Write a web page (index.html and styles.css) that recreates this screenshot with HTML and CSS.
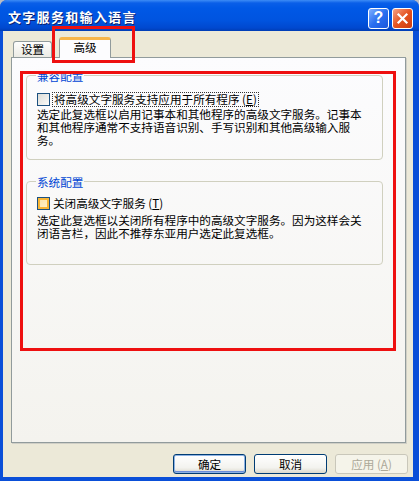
FILE: index.html
```html
<!DOCTYPE html>
<html>
<head>
<meta charset="utf-8">
<link rel="stylesheet" href="styles.css">
</head>
<body>
<div class="window">
  <div class="titlebar">
    <span class="title">文字服务和输入语言</span>
    <div class="tbtns">
      <div class="tbtn help">?</div>
      <div class="tbtn close">
        <svg width="13" height="13" viewBox="0 0 13 13"><path d="M2.5 2.5 L10.5 10.5 M10.5 2.5 L2.5 10.5" stroke="#fff" stroke-width="2.2" stroke-linecap="square"/></svg>
      </div>
    </div>
  </div>
  <div class="client">
    <div class="tabs">
      <div class="tab">设置</div>
      <div class="tab active">高级</div>
    </div>
    <div class="panel">
      <div class="group g1">
        <div class="gtitle">兼容配置</div>
        <div class="row">
          <span class="cb"></span>
          <span class="focus">将高级文字服务支持应用于所有程序 (<u>E</u>)</span>
        </div>
        <div class="desc">选定此复选框以启用记事本和其他程序的高级文字服务。记事本和其他程序通常不支持语音识别、手写识别和其他高级输入服务。</div>
      </div>
      <div class="group g2">
        <div class="gtitle">系统配置</div>
        <div class="row">
          <span class="cb hot"></span>
          <span class="lbl">关闭高级文字服务 (<u>T</u>)</span>
        </div>
        <div class="desc">选定此复选框以关闭所有程序中的高级文字服务。因为这样会关闭语言栏，因此不推荐东亚用户选定此复选框。</div>
      </div>
    </div>
    <div class="buttons">
      <div class="btn default">确定</div>
      <div class="btn">取消</div>
      <div class="btn disabled">应用 (<u>A</u>)</div>
    </div>
  </div>
  <div class="mark mark-tab"></div>
  <div class="mark mark-panel"></div>
</div>
</body>
</html>
```
FILE: styles.css
```css
*, *::before, *::after {
  box-sizing: border-box;
}
html, body {
  margin: 0;
  padding: 0;
  background: #b9bcc4;
}
body {
  font-family: "Noto Sans CJK SC", "DejaVu Sans", sans-serif;
  font-size: 12px;
  color: #000;
}
.window {
  position: relative;
  width: 419px;
  height: 481px;
  display: flex;
  flex-direction: column;
  border-radius: 7px 7px 0 0;
  background: #0a4fd8;
  overflow: hidden;
}
.titlebar {
  height: 31px;
  flex: none;
  display: flex;
  align-items: center;
  justify-content: space-between;
  padding: 0 6px 0 8px;
  background: linear-gradient(#3d8cf6 0px, #0a5fe8 3px, #0058e6 8px, #0054e0 20px, #0048cf 28px, #003db4 31px);
}
.title {
  color: #fff;
  font-weight: bold;
  font-size: 13px;
  letter-spacing: 1.3px;
  text-shadow: 1px 1px 0 #0a1f6e;
  margin-top: 2px;
}
.tbtns {
  display: flex;
  gap: 3px;
  margin-top: 5px;
}
.tbtn {
  width: 21px;
  height: 21px;
  border: 1px solid #fff;
  border-radius: 3px;
  display: flex;
  align-items: center;
  justify-content: center;
  color: #fff;
  font-family: "Liberation Sans", sans-serif;
  font-weight: bold;
  font-size: 16px;
}
.help {
  background: linear-gradient(135deg, #7fb0ff, #2a6ff0 50%, #1a56dc);
}
.close {
  background: linear-gradient(135deg, #f7a286, #e4521f 50%, #cc3b10);
}
.client {
  flex: 1;
  margin: 0 6px 4px 3px;
  background: #ece9d8;
  display: flex;
  flex-direction: column;
  padding: 6px 7px 0 8px;
}
.tabs {
  display: flex;
  align-items: flex-end;
  padding-left: 2px;
  height: 21px;
  flex: none;
  position: relative;
  z-index: 1;
  margin-bottom: -1px;
}
.tab {
  width: 39px;
  height: 16px;
  margin-bottom: 1px;
  border: 1px solid #919b9c;
  border-bottom: none;
  border-radius: 3px 3px 0 0;
  background: linear-gradient(#fdfdfc, #ecebe5);
  text-align: center;
  line-height: 15px;
  font-size: 11.6px;
}
.tab.active {
  width: 52px;
  height: 21px;
  margin-left: 7px;
  margin-bottom: 0;
  background: #fcfcfe;
  border-top: 3px solid #f7b64b;
  line-height: 15px;
}
.panel {
  height: 386px;
  flex: none;
  border: 1px solid #919b9c;
  background: linear-gradient(#fcfcfe, #f4f3ee);
  padding: 17px 22px 0 14px;
  box-shadow: 1px 1px 0 #d0cfc6;
}
.group {
  border: 1px solid #d0d0bf;
  border-radius: 4px;
  padding: 0 10px;
  line-height: 13px;
  font-size: 11.6px;
}
.g1 {
  padding-bottom: 12px;
}
.g2 {
  margin-top: 21px;
  padding-bottom: 24px;
}
.gtitle {
  display: block;
  width: fit-content;
  color: #0046d5;
  background: #fbfbfc;
  padding: 0 1px;
  margin: -7px 0 0 -1px;
  line-height: 14px;
}
.g2 .gtitle {
  background: #f9f9f7;
}
.row {
  display: flex;
  align-items: center;
  gap: 3px;
  margin-top: 10px;
  height: 13px;
}
.g2 .row {
  margin-top: 8px;
}
.cb {
  width: 13px;
  height: 13px;
  border: 1px solid #1c5180;
  background: linear-gradient(135deg, #dcdcd7, #fbfbf9);
  flex: none;
}
.cb.hot {
  box-shadow: inset 0 0 0 2px #f8b636;
  background: linear-gradient(135deg, #fde3a4, #fff3cf);
}
.focus {
  outline: 1px dotted #333;
  padding: 0 1px;
  line-height: 13px;
}
.lbl {
  line-height: 13px;
}
.desc {
  margin-top: 2px;
  line-height: 13px;
}
.g2 .desc {
  margin-top: 4px;
}
.buttons {
  display: flex;
  justify-content: flex-end;
  gap: 8px;
  padding-top: 11px;
  margin-right: -2px;
}
.btn {
  width: 73px;
  height: 20px;
  border: 1px solid #003c74;
  border-radius: 3px;
  background: linear-gradient(#ffffff, #f3f3ef 70%, #dcd9cc);
  text-align: center;
  line-height: 18px;
  font-size: 11.6px;
}
.btn.default {
  box-shadow: inset 0 0 0 1px #8db2e3, inset 0 -1px 0 1px #6b8ed8;
}
.btn.disabled {
  border-color: #c9c7ba;
  color: #aca899;
  background: #f5f4ea;
}
.mark {
  position: absolute;
  border: 3px solid #ee1010;
}
.mark-tab {
  left: 52px;
  top: 26px;
  width: 83px;
  height: 37px;
}
.mark-panel {
  left: 20px;
  top: 71px;
  width: 376px;
  height: 280px;
}
```
